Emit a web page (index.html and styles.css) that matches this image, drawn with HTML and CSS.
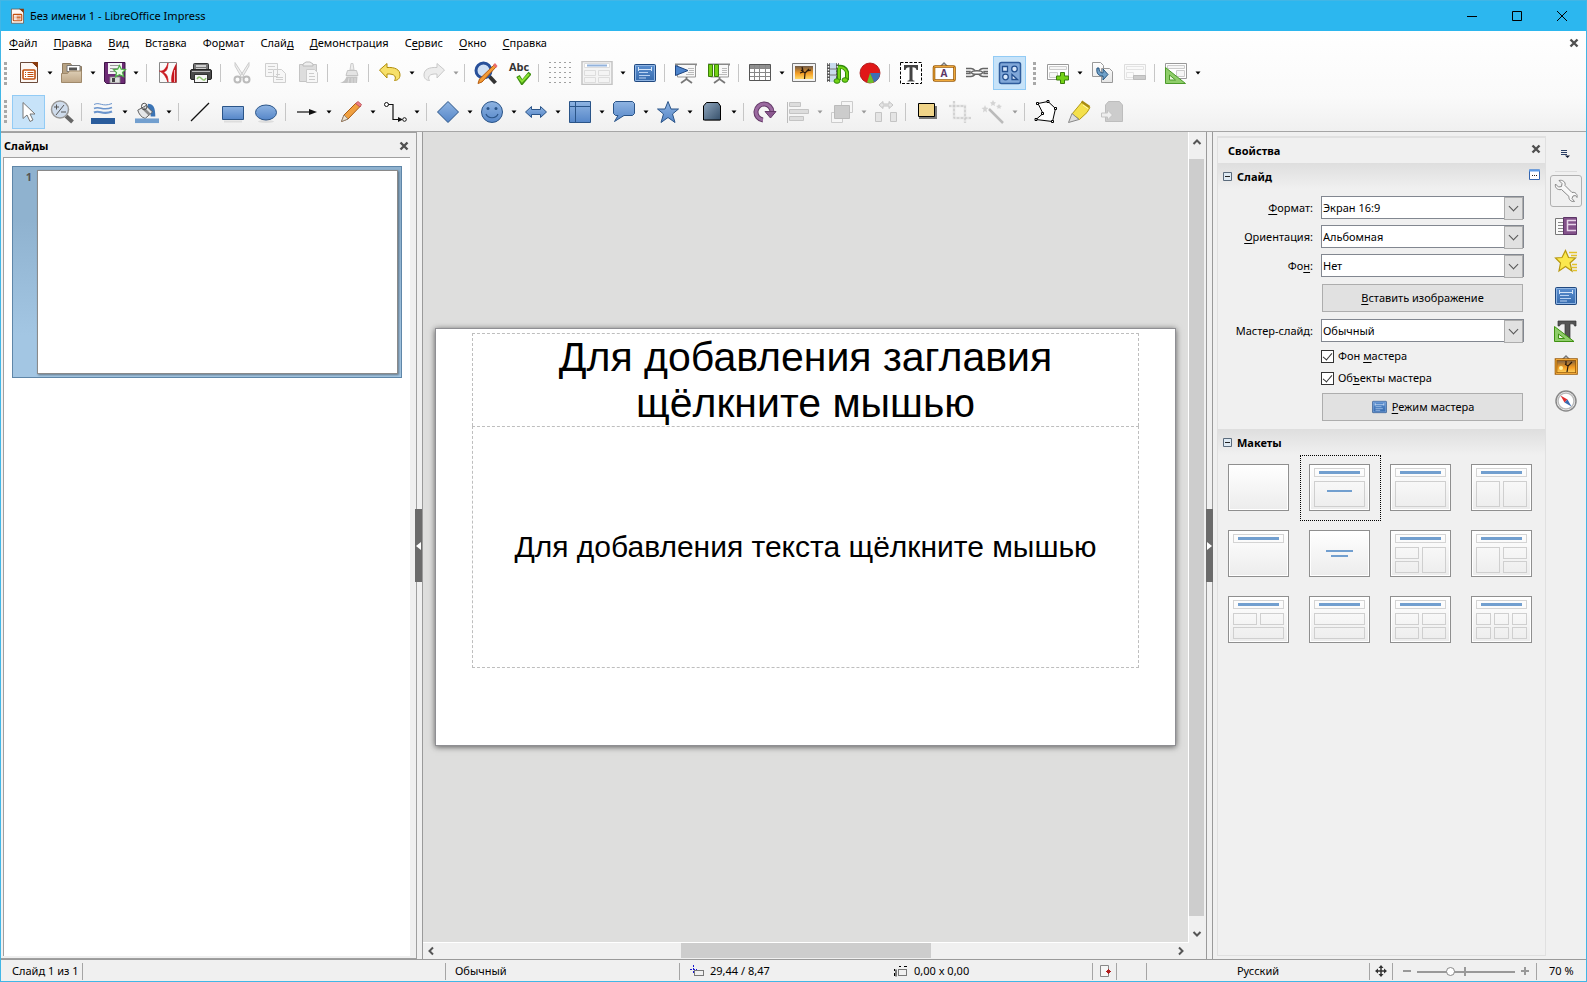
FILE: index.html
```html
<!DOCTYPE html>
<html lang="ru">
<head>
<meta charset="utf-8">
<title>Без имени 1 - LibreOffice Impress</title>
<link rel="stylesheet" href="styles.css">
</head>
<body>
<svg class="sprite" aria-hidden="true">
  <defs>
    <linearGradient id="g-blue" x1="0" y1="0" x2="0" y2="1"><stop offset="0" stop-color="#8fb4e2"/><stop offset="1" stop-color="#5586c8"/></linearGradient>
    <linearGradient id="g-deep" x1="0" y1="0" x2="0" y2="1"><stop offset="0" stop-color="#5b8fd0"/><stop offset="1" stop-color="#356aad"/></linearGradient>
    <linearGradient id="g-page" x1="0" y1="0" x2="0" y2="1"><stop offset="0" stop-color="#fff"/><stop offset="1" stop-color="#e6e6e6"/></linearGradient>
    <linearGradient id="g-tan" x1="0" y1="0" x2="0" y2="1"><stop offset="0" stop-color="#dccdb4"/><stop offset="1" stop-color="#c0a888"/></linearGradient>
    <linearGradient id="g-sun" x1="0" y1="0" x2="0" y2="1"><stop offset="0" stop-color="#6f5a48"/><stop offset="0.55" stop-color="#f39b22"/><stop offset="1" stop-color="#ffd968"/></linearGradient>
    <linearGradient id="g-slate" x1="0" y1="0" x2="1" y2="1"><stop offset="0" stop-color="#8fa6bd"/><stop offset="1" stop-color="#36506b"/></linearGradient>
  </defs>
  <symbol id="i-doc" viewBox="0 0 24 24"><path d="M3.500 1.500h12l5 5v15h-17z" fill="#fdf8f4" stroke="#6b4a3a"/><path d="M14 1h7v7l-2-3z" fill="#8a3a0c"/><rect x="6" y="9" width="12" height="9" rx="1" fill="#fff" stroke="#c2500f" stroke-width="1.600"/><path d="M8 11.500h1m1.500 0h6M8 13.500h1m1.500 0h6M8 15.500h1m1.500 0h6" stroke="#c2500f" stroke-width="1.200"/></symbol>
  <symbol id="i-open" viewBox="0 0 24 24"><path d="M2.500 20V2.500h8l2 3h9V20z" fill="#b7a283" stroke="#8f7b60"/><path d="M7 4.500h13v6H7z" fill="#fff" stroke="#777"/><path d="M9 6.500h8v3H9z" fill="#555"/><path d="M1.500 21.500v-9h6l2-2.500h12v11.500z" fill="url(#g-tan)" stroke="#a08a6b"/></symbol>
  <symbol id="i-save" viewBox="0 0 24 24"><path d="M1.500 1.500h20.500v21H3.500l-2-2z" fill="#6d2c75" stroke="#3e1446"/><rect x="5" y="2" width="14" height="11" fill="#f4f4f4"/><path d="M7 4.500h10M7 7.500h10M7 10.500h5" stroke="#999"/><rect x="7" y="16" width="10" height="6" fill="#ddd" stroke="#888" stroke-width=".8"/><rect x="9" y="17" width="3" height="4" fill="#444"/><path d="M16.500 4.500l1.700 3.600 4.300.3-3 3 1.200 4.300-4.200-2-4 2.200 1-4.300-3-3 4.200-.5z" fill="#e9ffe4" stroke="#4fae48" stroke-width="1.200"/></symbol>
  <symbol id="i-pdf" viewBox="0 0 24 24"><path d="M3.500 1.500h17v20h-17z" fill="#fafafa" stroke="#888"/><path d="M3.500 10c4 1 7-3 8.500-8-.5 6-1 8-5 9.500 4 1 5 5 5 9.500-2-5-4-9-8.500-11z" fill="#c8161d" stroke="#c8161d" stroke-width=".8"/><path d="M15.500 21.500c-1-6 1-13 5-19.500v19.500z" fill="#c8161d"/><path d="M18.500 9v12" stroke="#f0b0b2"/></symbol>
  <symbol id="i-print" viewBox="0 0 24 24"><rect x="4.500" y="2.500" width="15" height="8" rx="1" fill="#777" stroke="#333"/><path d="M7 5h10M7 8h10" stroke="#eee" stroke-width="1.500"/><rect x="1.500" y="8.500" width="21" height="10" rx="1.500" fill="#4a4a4a" stroke="#222"/><path d="M3 10.500h18" stroke="#bbb"/><rect x="5.500" y="13.500" width="13" height="8" fill="#f7f7f7" stroke="#333"/><path d="M8 18c2-3 3-2 5 0s3 1 4-1" stroke="#8fc670" stroke-width="1.500" fill="none"/></symbol>
  <symbol id="i-cut" viewBox="0 0 24 24"><path d="M5 1.500l9 14-2 1.500L5 5zM19 1.500l-9 14 2 1.500L19 5z" fill="#eee" stroke="#ccc"/><g fill="none" stroke="#bbb" stroke-width="2"><circle cx="7.500" cy="18.500" r="3"/><circle cx="16.500" cy="18.500" r="3"/></g></symbol>
  <symbol id="i-copy" viewBox="0 0 24 24"><g fill="#f7f7f7" stroke="#cfcfcf"><path d="M2.500 2.500h12v13h-12zM10.500 8.500h8l4 4v9h-12z"/><path d="M5 5.500h7M5 8.500h5M5 11.500h4M13 13.500h4M13 16.500h7M13 18.500h7"/></g></symbol>
  <symbol id="i-paste" viewBox="0 0 24 24"><path d="M3.500 3.500h17v17h-17z" fill="#ddd" stroke="#c4c4c4"/><path d="M7 5V3l3-2h4l3 2v2z" fill="#eee" stroke="#bbb"/><path d="M10.500 8.500h8l3 3v10h-11z" fill="#f7f7f7" stroke="#ccc"/><path d="M13 12.500h5M13 15.500h6M13 18.500h6" stroke="#ccc"/></symbol>
  <symbol id="i-brush" viewBox="0 0 24 24"><path d="M14 2.500h2l1 6.500h-4z" fill="#eee" stroke="#ccc"/><path d="M10.500 9.500h9l1.500 5H9z" fill="#e4e4e4" stroke="#c4c4c4"/><path d="M9.500 15.500h11l-.5 6.500H3c3.500-1 5.500-3 6.500-6.500z" fill="#c4c4c4"/><path d="M12 17l-1 5M15 17v5M18 17v5" stroke="#ddd"/></symbol>
  <symbol id="i-undo" viewBox="0 0 24 24"><path d="M1.500 9L9 2.500v4c8-.5 13 2 13 7.500 0 4-3 5.500-5.500 5.500 2-3 1-7-7.500-6.500v4z" fill="#f7e06a" stroke="#b08c0a" stroke-linejoin="round"/></symbol>
  <symbol id="i-redo" viewBox="0 0 24 24"><path d="M22.500 9L15 2.500v4C7 6 2 8.500 2 14c0 4 3 5.500 5.500 5.500-2-3-1-7 7.500-6.500v4z" fill="#ececec" stroke="#c9c9c9" stroke-linejoin="round"/></symbol>
  <symbol id="i-find" viewBox="0 0 24 24"><path d="M15 15l6.500 7" stroke="#333" stroke-width="4"/><circle cx="9.500" cy="9.500" r="7.500" fill="#cfdff4" stroke="#28509a" stroke-width="3"/><path d="M20 4l2 2L8 21l-4 1.500L5.500 18z" fill="#f39a35" stroke="#b65c0e"/><path d="M19 4l3 3 1.500-2L21 2z" fill="#ea6b6b"/></symbol>
  <symbol id="i-grid" viewBox="0 0 24 24"><path d="M1.500 1.500h22M1.500 6.500h22M1.500 11.500h22M1.500 16.500h22M1.500 21.500h22" stroke="#444" stroke-dasharray="1 4"/></symbol>
  <symbol id="i-layout" viewBox="0 0 32 24"><path d="M1 .5h30v23H1z" fill="#f4f4f4" stroke="#c4c4c4" stroke-width="1.500"/><path d="M3.500 2.500h25v4h-25z" fill="#fff" stroke="#ddd"/><path d="M6 4.500h20" stroke="#93b3dc" stroke-width="2"/><path d="M3.500 9.500h11v5h-11zM17.500 9.500h11v5h-11zM3.500 16.500h11v5h-11zM17.500 16.500h11v5h-11z" fill="none" stroke="#ddd"/></symbol>
  <symbol id="i-slide" viewBox="0 0 24 24"><rect x="1.500" y="3.500" width="21" height="17" rx="1" fill="url(#g-deep)" stroke="#20487f"/><path d="M2.500 4.500h19v15h-19z" fill="none" stroke="#8fb4e2"/><path d="M5 8.500h14M5.500 6v4M18.500 6v4" stroke="#d4e4f8"/><path d="M6 11.500h9M6 14.500h11M6 17h7" stroke="#b9d2f2"/></symbol>
  <symbol id="i-show" viewBox="0 0 24 24"><path d="M1 3.500h22" stroke="#888" stroke-width="2"/><path d="M3.500 4v12h18V4" fill="#f8f8f8" stroke="#999"/><path d="M14 7.500h6M15 9.500h5M14 11.500h6M12 13.500h8" stroke="#bbb"/><path d="M1.500 4.500L14 9.500l-12.500 5z" fill="#4d84cc" stroke="#1e4580"/><path d="M12.500 16v3M7 22l5.500-4L18 22" fill="none" stroke="#777" stroke-width="1.800"/></symbol>
  <symbol id="i-show2" viewBox="0 0 24 24"><path d="M1 3.500h22" stroke="#888" stroke-width="2"/><path d="M3.500 4v12h18V4" fill="#f8f8f8" stroke="#999"/><path d="M15 7.500h5M15 9.500h5M15 11.500h5M12 13.500h8" stroke="#bbb"/><path d="M1.500 3.500h4v12h-4zM7.500 3.500h4v12h-4z" fill="#73d216" stroke="#3b7d0b"/><path d="M12.500 16v3M7 22l5.500-4L18 22" fill="none" stroke="#777" stroke-width="1.800"/></symbol>
  <symbol id="i-table" viewBox="0 0 24 24"><path d="M1.500 3.500h21v16h-21z" fill="#fff"/><path d="M1.500 3.500h21v4h-21z" fill="#909090"/><path d="M1 7.500h22M1 11.500h22M1 15.500h22M6.500 3v17M11.500 3v17M17.500 3v17" fill="none" stroke="#888"/><path d="M1.500 3.500h21v16h-21z" fill="none" stroke="#555"/></symbol>
  <symbol id="i-photo" viewBox="0 0 24 24"><path d="M.5 2.500h23v18H.5z" fill="#f2f2f2" stroke="#777"/><path d="M3 5h18v13H3z" fill="url(#g-sun)"/><path d="M12.500 18l.5-6-4-3M13 12l4-4M11 10l-1-4M15 10l4-1M8 12l3-1" stroke="#2b1a0c" stroke-width="1.200" fill="none"/></symbol>
  <symbol id="i-media" viewBox="0 0 24 24"><path d="M2 2h12v19H2z" fill="#c9dbee"/><path d="M3.500 2v19M12.500 2v19" stroke="#555" stroke-width="3"/><path d="M3.500 2v19M12.500 2v19" stroke="#fff" stroke-width="1.500" stroke-dasharray="1.500 1.500"/><path d="M5 8h6M5 14h6" stroke="#777"/><path d="M13 6c4-1 8 1 9 5v8M14 7v12" fill="none" stroke="#2f8a0a" stroke-width="4"/><path d="M13 6.500c4-1 8 1 9 5V19M14 7v12" fill="none" stroke="#73d216" stroke-width="2"/><ellipse cx="12" cy="20" rx="3" ry="2.300" fill="#73d216" stroke="#2f8a0a"/><ellipse cx="20" cy="19" rx="3" ry="2.300" fill="#73d216" stroke="#2f8a0a"/></symbol>
  <symbol id="i-chart" viewBox="0 0 24 24"><circle cx="12" cy="12" r="10" fill="#e01818" stroke="#a30c0c" stroke-width=".8"/><path d="M12 12h10a10 10 0 0 1-6 9.200z" fill="#3e6fb5"/><path d="M12 12l4 9.200a10 10 0 0 1-7 .4z" fill="#6cbf2a"/></symbol>
  <symbol id="i-text" viewBox="0 0 24 24"><path d="M1.500 1.500h21v21h-21z" fill="#fff" stroke="#000" stroke-dasharray="3 1.500"/><path d="M5 4h14v5h-1.500c-.5-2-1-2.800-4-2.800V18c0 1.500.5 1.500 2 1.700V20.500H8.500v-.8c1.500-.2 2-.2 2-1.700V6.200c-3 0-3.500.8-4 2.800H5z" fill="#444"/></symbol>
  <symbol id="i-link" viewBox="0 0 24 24"><g fill="none" stroke="#666" stroke-width="1.500"><path d="M1 7.500h5c2 0 3 1 4 2M1 15.500h5c2 0 3-1 4-2M23 7.500h-5c-2 0-3 1-4 2M23 15.500h-5c-2 0-3-1-4-2M1 10.500h4v2H1M23 10.500h-4v2h4"/><ellipse cx="12" cy="11.500" rx="5.500" ry="1.800"/></g></symbol>
  <symbol id="i-draw" viewBox="0 0 24 24"><rect x="1.500" y="1.500" width="21" height="21" rx="2" fill="#81a8d9" stroke="#2f5c9c" stroke-width="1.500"/><g fill="#d9e9fb" stroke="#24508f" stroke-width="1.300"><path d="M4.500 5.500h5v5h-5z"/><circle cx="16.500" cy="8" r="2.800"/><circle cx="7.500" cy="16" r="2.800"/><path d="M14 13.500v5h5.500z"/></g></symbol>
  <symbol id="i-newslide" viewBox="0 0 24 24"><path d="M1.500 3.500h21v15h-21z" fill="#fff" stroke="#999"/><path d="M3.500 5.500h17v3h-17zM3.500 11.500h8v5h-8z" fill="#f6f6f6" stroke="#ccc"/><path d="M14.500 11.500h4v3.500h4v4h-4v3.500h-4v-3.500h-4v-4h4z" fill="#73d216" stroke="#3b7d0b"/></symbol>
  <symbol id="i-dup" viewBox="0 0 24 24"><path d="M2.500 1.500h8l3 3v11h-11zM11.500 7.500h8l3 3v11h-11z" fill="url(#g-page)" stroke="#999"/><path d="M7 7c-1 6 2 8 6 8v4l5-5.500-5-5.500v4c-3 0-4-2-4-5z" fill="#6fa0c8" stroke="#27557f"/></symbol>
  <symbol id="i-delslide" viewBox="0 0 24 24"><path d="M1.500 3.500h21v15h-21z" fill="#fafafa" stroke="#ddd"/><path d="M3.500 5.500h17v3h-17zM3.500 11.500h7v5h-7z" fill="none" stroke="#e4e4e4"/><path d="M10.500 14.500h12v4h-12z" fill="#ccc" stroke="#bbb"/></symbol>
  <symbol id="i-design" viewBox="0 0 24 24"><path d="M1.500 2.500h21v15h-21z" fill="#fff" stroke="#999"/><path d="M3.500 4.500h17v3h-17zM12.500 9.500h8v6h-8z" fill="#f6f6f6" stroke="#ccc"/><path d="M1.500 6.500v16h20z" fill="#8fce6a" stroke="#4c9a2a"/><path d="M5.500 14v5h6z" fill="#eaf7e0" stroke="#4c9a2a"/></symbol>
  <symbol id="i-select" viewBox="0 0 24 24"><path d="M6 2.500v16l4-3.500 3 6.500 3-1.500-3-6h5z" fill="#fff" stroke="#777" stroke-linejoin="round"/></symbol>
  <symbol id="i-zoom" viewBox="0 0 24 24"><path d="M16 16l6.500 6" stroke="#666" stroke-width="4"/><circle cx="10" cy="9.500" r="8.500" fill="#cfdcec" stroke="#999" stroke-width="1.500"/><path d="M4 7h5M6.500 4.500v5M11 12h5M14 5L6 15" stroke="#555"/></symbol>
  <symbol id="i-lines" viewBox="0 0 24 24"><g fill="none" stroke="#6a94cc"><path d="M3 4.500c6-3 8 3 18-1" stroke-width="1"/><path d="M3 8.500c6-3 8 3 18-1" stroke-width="1.600"/><path d="M3 12.500c6-3 8 3 18-1" stroke-width="2.200"/></g><path d="M0 18h24v6H0z" fill="#2a5c9c"/></symbol>
  <symbol id="i-fill" viewBox="0 0 26 24"><path d="M14 3c6 0 8 4 8 14h-5c0-5-1-6-4-8z" fill="#3b74b5"/><path d="M3 10l9-5 7 7-8 7c-4-1-7-5-8-9z" fill="#e4e6e8" stroke="#555"/><path d="M9 8l7 7" stroke="#888" stroke-width="3"/><ellipse cx="10" cy="6" rx="3" ry="3.500" fill="none" stroke="#444"/><path d="M0 19h26v5H0z" fill="#729fcf"/></symbol>
  <symbol id="i-line" viewBox="0 0 24 24"><path d="M3 21L21 3" stroke="#111" stroke-width="1.200"/></symbol>
  <symbol id="i-rect" viewBox="0 0 24 24"><path d="M3 21.500h18" stroke="#ddd" stroke-width="2"/><path d="M1.500 6.500h21v13h-21z" fill="url(#g-blue)" stroke="#2a5488"/></symbol>
  <symbol id="i-ellipse" viewBox="0 0 24 24"><ellipse cx="12" cy="21.500" rx="8" ry="1.500" fill="#ddd"/><ellipse cx="12" cy="12.500" rx="10.500" ry="7.500" fill="url(#g-blue)" stroke="#2a5488"/></symbol>
  <symbol id="i-arrow" viewBox="0 0 24 24"><path d="M2 12h15" stroke="#111" stroke-width="1.200"/><path d="M14 9l8 3-8 3z" fill="#111"/></symbol>
  <symbol id="i-pencil" viewBox="0 0 24 24"><path d="M17 3l4.500 3L9 19l-6.500 2.500L5 15z" fill="#f0a040" stroke="#a85a12"/><path d="M16.500 3.500L19 1.500l3.500 3L21 7z" fill="#ec7f85" stroke="#b84a50" stroke-width=".8"/><path d="M2.500 21.500L5 15l4 4z" fill="#eee0cc" stroke="#777" stroke-width=".7"/></symbol>
  <symbol id="i-conn" viewBox="0 0 24 24"><path d="M5 4.500h5v15h9" fill="none" stroke="#111" stroke-width="1.200"/><path d="M15 17v5l5-2.500z" fill="#111"/><circle cx="3.500" cy="4.500" r="2" fill="#fff" stroke="#111"/><circle cx="21.500" cy="19.500" r="1.800" fill="#fff" stroke="#111"/></symbol>
  <symbol id="i-diamond" viewBox="0 0 24 24"><path d="M12 1.500L22.500 12 12 22.500 1.500 12z" fill="url(#g-blue)" stroke="#2a5488"/></symbol>
  <symbol id="i-smile" viewBox="0 0 24 24"><circle cx="12" cy="12" r="10.500" fill="url(#g-blue)" stroke="#2a5488"/><circle cx="8" cy="8.500" r="1.500" fill="#2a5488"/><circle cx="16" cy="8.500" r="1.500" fill="#2a5488"/><path d="M6 14c2 5 10 5 12 0" fill="none" stroke="#2a5488" stroke-width="1.200"/></symbol>
  <symbol id="i-dbl" viewBox="0 0 24 24"><path d="M1.500 12l6-5.500v3h9v-3l6 5.500-6 5.500v-3h-9v3z" fill="url(#g-blue)" stroke="#2a5488"/></symbol>
  <symbol id="i-flow" viewBox="0 0 24 24"><path d="M1.500 1.500h21v21h-21zM1.500 6.500h21M7.500 1.500v21" fill="url(#g-blue)" stroke="#2a5488"/></symbol>
  <symbol id="i-callout" viewBox="0 0 24 24"><path d="M3.500 1.500h17l2 2v10l-2 2H12l-9.500 6 3.500-6H3.500l-2-2v-10z" fill="url(#g-blue)" stroke="#2a5488"/></symbol>
  <symbol id="i-star" viewBox="0 0 24 24"><path d="M12 1.500l3 7.500h7.500l-6 5 2.500 8.500-7-5-7 5L7.500 14l-6-5H9z" fill="url(#g-blue)" stroke="#2a5488"/></symbol>
  <symbol id="i-cube" viewBox="0 0 24 24"><path d="M5 4h15v17H5z" fill="#aaa"/><path d="M3.500 6l3-3.500H18l2.500 3.500v14h-17z" fill="url(#g-slate)" stroke="#000"/></symbol>
  <symbol id="i-rotate" viewBox="0 0 24 24"><path d="M10 20a8 8 0 1 1 9-8" fill="none" stroke="#643a68" stroke-width="5"/><path d="M10 20a8 8 0 1 1 9-8" fill="none" stroke="#9b6aa0" stroke-width="3"/><path d="M12 11.500h11L17.500 18z" fill="#8b5890" stroke="#643a68"/></symbol>
  <symbol id="i-align" viewBox="0 0 24 24"><path d="M1.500 2v21" stroke="#bbb"/><path d="M3.500 2.500h11v4h-11zM3.500 9.500h19v4h-19zM3.500 16.500h14v4h-14z" fill="#ddd" stroke="#c4c4c4"/></symbol>
  <symbol id="i-stack" viewBox="0 0 24 24"><path d="M11.500 1.500h11v11h-11zM1.500 12.500h11v10h-11z" fill="#f6f6f6" stroke="#ccc"/><path d="M4.500 5.500h15v13h-15z" fill="#ccc" stroke="#bbb"/></symbol>
  <symbol id="i-dist" viewBox="0 0 24 24"><path d="M5 5l4-3.500V4h6V1.500L19 5l-4 3.500V6H9v2.500zM1.500 12.500h6v9h-6zM16.500 12.500h6v9h-6z" fill="#e4e4e4" stroke="#c4c4c4"/></symbol>
  <symbol id="i-shadow" viewBox="0 0 24 24"><path d="M4 6h18v13H4z" fill="#777"/><path d="M3.500 3.500h16v13h-16z" fill="#f0d488" stroke="#000"/></symbol>
  <symbol id="i-crop" viewBox="0 0 24 24"><path d="M6 1v17h17M1 6h16v17" fill="none" stroke="#e2e2e2" stroke-width="2.500"/><path d="M6 1v17h17M1 6h16v17" fill="none" stroke="#c4c4c4" stroke-dasharray="2 2"/></symbol>
  <symbol id="i-wand" viewBox="0 0 24 24"><path d="M8 9l14 14" stroke="#bbb" stroke-width="2.500"/><path d="M4 5l1 2.500 2.500.5-2 1.500.5 3-2-1.500-2 1.500.5-3-2-1.500 2.500-.5zM12 0l1 2 2 .5-1.500 1.500.5 2-2-1-2 1 .5-2L9 2.500l2-.5zM18 4l1 1.500 2 .5-1.500 1v2L18 8l-1.500 1V7L15 6l2-.5z" fill="#d4d4d4"/></symbol>
  <symbol id="i-points" viewBox="0 0 24 24"><path d="M4 3.500l10-2L21.500 8.500 18.500 21.500 2 19.500l7-6z" fill="#fff" stroke="#000"/><g fill="#fff" stroke="#000"><path d="M2.500 2.500h2v2h-2zM13 .5h2v2h-2zM20.500 7.500h2v2h-2zM17.500 20.500h2v2h-2zM1 18.500h2v2H1zM7.500 12.500h2v2h-2z"/></g></symbol>
  <symbol id="i-glue" viewBox="0 0 24 24"><path d="M15 2l8 5.500-3 5-7.500 7L5 14z" fill="#f4e04c" stroke="#b39a12"/><path d="M14.500 1.500l8 5.500" stroke="#a88b10" stroke-width="2.500"/><path d="M16 5l5 3.500" stroke="#fff8b0"/><path d="M5 13.500l7 6L1.500 22.500z" fill="#ddd" stroke="#888"/></symbol>
  <symbol id="i-ext" viewBox="0 0 24 24"><path d="M5.500 5l3-3.500h11l3 3.500v16.500h-17z" fill="#ccc" stroke="#bdbdbd"/><path d="M1.500 13h6v-3l5 5-5 5v-3h-6z" fill="#eee" stroke="#c4c4c4"/></symbol>
  <symbol id="i-wrench" viewBox="0 0 24 24"><path d="M5 1.500l3 3-.5 3-3 .5-3-3C.5 8 3 11.500 7.500 10.500l7.500 7c-.5 3 2 5.500 5.500 5L18 19.500l1-2.500 2.500-.5 1.500 2c1-3-2-6-5-5l-7-7c1-3.500-2.500-6-6-5z" fill="#f8f8f8" stroke="#888"/></symbol>
  <symbol id="i-trans" viewBox="0 0 24 24"><path d="M1.500 4.500h10v16h-10z" fill="#fafafa" stroke="#777"/><path d="M4 8.500h5M4 11.500h5M4 14.500h5M4 17.500h5" stroke="#888"/><path d="M9.500 3.500h13v17h-13z" fill="#83528a" stroke="#5c3566"/><path d="M22 6.500h-8.500v10H22M14 10.500h8" fill="none" stroke="#e8d6ea" stroke-width="1.500"/></symbol>
  <symbol id="i-anim" viewBox="0 0 24 24"><path d="M15 3.500h8M17 6.500h6M18 15.500h5M18 18.500h5M19 21.500h4" stroke="#e3c12b" stroke-width="1.500"/><path d="M11.500 1.500l3 7 7 .5-5.500 5 2 8-6.500-4.500L5 22l1.500-8-5-5 6.500-.5z" fill="#fbe84e" stroke="#b8990f" stroke-width="1.200"/></symbol>
  <symbol id="i-styles" viewBox="0 0 24 24"><path d="M4 2h18v5h-1.500c-.5-2-1-2.200-4.500-2.200V20h-5V4.800C7.500 4.800 6 5 5.500 7H4z" fill="#555" stroke="#333" stroke-width=".7"/><path d="M.5 7.500v15H20z" fill="#8fce6a" stroke="#3f9010"/><path d="M4.500 15v4.500h6z" fill="#eaf7e0" stroke="#3f9010"/></symbol>
  <symbol id="i-gallery" viewBox="0 0 24 24"><path d="M8 6l4-4 4 4" fill="none" stroke="#777" stroke-width="1.500"/><path d="M2 5.500h20.500v14H2z" fill="url(#g-sun)" stroke="#9a5a06" stroke-width="2.600"/><path d="M2 5.500h20.500v14H2z" fill="none" stroke="#f0a93a"/><path d="M13 18l1-6-3-2M14 12l4-4M12 10V7" stroke="#2b1a0c" stroke-width="1.200" fill="none"/><circle cx="7" cy="14" r="2" fill="#fff2a0"/></symbol>
  <symbol id="i-compass" viewBox="0 0 24 24"><circle cx="12" cy="12" r="10" fill="#fff" stroke="#888" stroke-width="1.500"/><circle cx="12" cy="12" r="8" fill="#fff" stroke="#bbb" stroke-width="1.500"/><path d="M6.500 6.500l7 4-3 3z" fill="#e03030"/><path d="M17.500 17.500l-7-4 3-3z" fill="#3a6ab0"/></symbol>
  <symbol id="i-x" viewBox="0 0 10 10"><path d="M1.500 1.500l7 7M8.500 1.500l-7 7" stroke="#505050" stroke-width="2.400"/></symbol>
  <symbol id="i-tri" viewBox="0 0 6 4"><path d="M.5 .5h5L3 3.500z"/></symbol>
  <symbol id="i-minus" viewBox="0 0 10 10"><path d="M.5 .5h8v8h-8z" fill="#dfeaf3" stroke="#5b6b7c"/><path d="M2 4.500h5" stroke="#222"/></symbol>
  <symbol id="i-up" viewBox="0 0 10 8"><path d="M1.500 6L5 2.500 8.500 6" fill="none" stroke="#555" stroke-width="2"/></symbol>
</svg>

<div class="window">
  <header class="titlebar">
    <svg class="app-icon"><use href="#i-doc"/></svg>
    <h1 class="app-title">Без имени 1 - LibreOffice Impress</h1>
    <button class="win-btn" aria-label="Свернуть"><svg viewBox="0 0 10 10"><path d="M0 5.500h10" stroke="#000"/></svg></button>
    <button class="win-btn" aria-label="Развернуть"><svg viewBox="0 0 10 10"><path d="M.5 .5h9v9h-9z" stroke="#000" fill="none"/></svg></button>
    <button class="win-btn" aria-label="Закрыть"><svg viewBox="0 0 10 10"><path d="M0 0l10 10M10 0L0 10" stroke="#000"/></svg></button>
  </header>

  <div class="chrome">
    <nav class="menubar">
      <button><u>Ф</u>айл</button><button><u>П</u>равка</button><button><u>В</u>ид</button><button>Вст<u>а</u>вка</button><button>Фо<u>р</u>мат</button><button>Слай<u>д</u></button><button><u>Д</u>емонстрация</button><button>С<u>е</u>рвис</button><button><u>О</u>кно</button><button><u>С</u>правка</button>
      <button class="close" aria-label="Закрыть документ"><svg><use href="#i-x"/></svg></button>
    </nav>

    <div class="toolbar" role="toolbar" aria-label="Стандартная">
      <span class="grip"></span>
      <div class="group tight">
        <button class="tool" aria-label="Создать"><svg><use href="#i-doc"/></svg></button><button class="drop" aria-label="Ещё"><svg><use href="#i-tri"/></svg></button>
        <button class="tool" aria-label="Открыть"><svg><use href="#i-open"/></svg></button><button class="drop" aria-label="Ещё"><svg><use href="#i-tri"/></svg></button>
        <button class="tool" aria-label="Сохранить"><svg><use href="#i-save"/></svg></button><button class="drop" aria-label="Ещё"><svg><use href="#i-tri"/></svg></button>
      </div>
      <span class="sep"></span>
      <button class="tool" aria-label="PDF"><svg><use href="#i-pdf"/></svg></button>
      <button class="tool" aria-label="Печать"><svg><use href="#i-print"/></svg></button>
      <span class="sep"></span>
      <button class="tool" disabled aria-label="Вырезать"><svg><use href="#i-cut"/></svg></button>
      <button class="tool" disabled aria-label="Копировать"><svg><use href="#i-copy"/></svg></button>
      <button class="tool" disabled aria-label="Вставить"><svg><use href="#i-paste"/></svg></button>
      <span class="sep"></span>
      <button class="tool" disabled aria-label="Копировать формат"><svg><use href="#i-brush"/></svg></button>
      <span class="sep"></span>
      <button class="tool" aria-label="Отменить"><svg><use href="#i-undo"/></svg></button><button class="drop" aria-label="Ещё"><svg><use href="#i-tri"/></svg></button>
      <button class="tool" disabled aria-label="Вернуть"><svg><use href="#i-redo"/></svg></button><button class="drop" disabled aria-label="Ещё"><svg><use href="#i-tri"/></svg></button>
      <span class="sep"></span>
      <button class="tool" aria-label="Найти и заменить"><svg><use href="#i-find"/></svg></button>
      <button class="tool" aria-label="Орфография"><svg viewBox="0 0 24 24"><text x="12" y="10" text-anchor="middle" class="abc">Abc</text><path d="M11 15l4 6.500L23 12" fill="none" stroke="#3f9010" stroke-width="4"/><path d="M11.500 16l3.500 4.500 7-7.500" fill="none" stroke="#8ae234" stroke-width="2"/></svg></button>
      <span class="sep"></span>
      <button class="tool" aria-label="Сетка"><svg><use href="#i-grid"/></svg></button>
      <button class="tool wide" aria-label="Виды"><svg><use href="#i-layout"/></svg></button><button class="drop" aria-label="Ещё"><svg><use href="#i-tri"/></svg></button>
      <button class="tool" aria-label="Мастер-слайд"><svg><use href="#i-slide"/></svg></button>
      <span class="sep"></span>
      <button class="tool" aria-label="Показ с первого"><svg><use href="#i-show"/></svg></button>
      <button class="tool" aria-label="Показ с текущего"><svg><use href="#i-show2"/></svg></button>
      <span class="sep"></span>
      <button class="tool" aria-label="Таблица"><svg><use href="#i-table"/></svg></button><button class="drop" aria-label="Ещё"><svg><use href="#i-tri"/></svg></button>
      <button class="tool" aria-label="Изображение"><svg><use href="#i-photo"/></svg></button>
      <button class="tool" aria-label="Аудио или видео"><svg><use href="#i-media"/></svg></button>
      <button class="tool" aria-label="Диаграмма"><svg><use href="#i-chart"/></svg></button>
      <span class="sep"></span>
      <button class="tool" aria-label="Текстовое поле"><svg><use href="#i-text"/></svg></button>
      <button class="tool" aria-label="Fontwork"><svg viewBox="0 0 24 24"><path d="M8 6l4-4 4 4" fill="none" stroke="#777" stroke-width="1.500"/><rect x="2" y="5.500" width="20.500" height="14" rx="1" fill="#fff" stroke="#9a5a06" stroke-width="2.600"/><rect x="2" y="5.500" width="20.500" height="14" rx="1" fill="none" stroke="#f0a93a"/><text x="12" y="16" text-anchor="middle" class="glyph-a">A</text></svg></button>
      <button class="tool" aria-label="Гиперссылка"><svg><use href="#i-link"/></svg></button>
      <button class="tool on" aria-label="Рисование"><svg><use href="#i-draw"/></svg></button>
      <span class="grip inner"></span>
      <button class="tool" aria-label="Создать слайд"><svg><use href="#i-newslide"/></svg></button><button class="drop" aria-label="Ещё"><svg><use href="#i-tri"/></svg></button>
      <button class="tool" aria-label="Дублировать слайд"><svg><use href="#i-dup"/></svg></button>
      <button class="tool" disabled aria-label="Удалить слайд"><svg><use href="#i-delslide"/></svg></button>
      <span class="sep"></span>
      <button class="tool" aria-label="Макет слайда"><svg><use href="#i-design"/></svg></button><button class="drop" aria-label="Ещё"><svg><use href="#i-tri"/></svg></button>
    </div>

    <div class="toolbar drawing" role="toolbar" aria-label="Рисование">
      <span class="grip"></span>
      <button class="tool on" aria-label="Выделить"><svg><use href="#i-select"/></svg></button>
      <button class="tool" aria-label="Масштаб"><svg><use href="#i-zoom"/></svg></button>
      <span class="sep"></span>
      <button class="tool" aria-label="Цвет линий"><svg><use href="#i-lines"/></svg></button><button class="drop" aria-label="Ещё"><svg><use href="#i-tri"/></svg></button>
      <button class="tool" aria-label="Цвет заливки"><svg><use href="#i-fill"/></svg></button><button class="drop" aria-label="Ещё"><svg><use href="#i-tri"/></svg></button>
      <span class="sep"></span>
      <button class="tool" aria-label="Линия"><svg><use href="#i-line"/></svg></button>
      <button class="tool" aria-label="Прямоугольник"><svg><use href="#i-rect"/></svg></button>
      <button class="tool" aria-label="Эллипс"><svg><use href="#i-ellipse"/></svg></button>
      <span class="sep"></span>
      <button class="tool" aria-label="Линии и стрелки"><svg><use href="#i-arrow"/></svg></button><button class="drop" aria-label="Ещё"><svg><use href="#i-tri"/></svg></button>
      <button class="tool" aria-label="Кривая"><svg><use href="#i-pencil"/></svg></button><button class="drop" aria-label="Ещё"><svg><use href="#i-tri"/></svg></button>
      <button class="tool" aria-label="Соединители"><svg><use href="#i-conn"/></svg></button><button class="drop" aria-label="Ещё"><svg><use href="#i-tri"/></svg></button>
      <span class="sep"></span>
      <button class="tool" aria-label="Основные фигуры"><svg><use href="#i-diamond"/></svg></button><button class="drop" aria-label="Ещё"><svg><use href="#i-tri"/></svg></button>
      <button class="tool" aria-label="Символы"><svg><use href="#i-smile"/></svg></button><button class="drop" aria-label="Ещё"><svg><use href="#i-tri"/></svg></button>
      <button class="tool" aria-label="Блочные стрелки"><svg><use href="#i-dbl"/></svg></button><button class="drop" aria-label="Ещё"><svg><use href="#i-tri"/></svg></button>
      <button class="tool" aria-label="Блок-схемы"><svg><use href="#i-flow"/></svg></button><button class="drop" aria-label="Ещё"><svg><use href="#i-tri"/></svg></button>
      <button class="tool" aria-label="Выноски"><svg><use href="#i-callout"/></svg></button><button class="drop" aria-label="Ещё"><svg><use href="#i-tri"/></svg></button>
      <button class="tool" aria-label="Звёзды"><svg><use href="#i-star"/></svg></button><button class="drop" aria-label="Ещё"><svg><use href="#i-tri"/></svg></button>
      <button class="tool" aria-label="Объёмные фигуры"><svg><use href="#i-cube"/></svg></button><button class="drop" aria-label="Ещё"><svg><use href="#i-tri"/></svg></button>
      <span class="sep"></span>
      <button class="tool" aria-label="Повернуть"><svg><use href="#i-rotate"/></svg></button>
      <button class="tool" disabled aria-label="Выравнивание"><svg><use href="#i-align"/></svg></button><button class="drop" disabled aria-label="Ещё"><svg><use href="#i-tri"/></svg></button>
      <button class="tool" disabled aria-label="Расположить"><svg><use href="#i-stack"/></svg></button><button class="drop" disabled aria-label="Ещё"><svg><use href="#i-tri"/></svg></button>
      <button class="tool" disabled aria-label="Распределить"><svg><use href="#i-dist"/></svg></button>
      <span class="sep"></span>
      <button class="tool" aria-label="Тень"><svg><use href="#i-shadow"/></svg></button>
      <button class="tool" disabled aria-label="Кадрировать"><svg><use href="#i-crop"/></svg></button>
      <button class="tool" disabled aria-label="Фильтр"><svg><use href="#i-wand"/></svg></button><button class="drop" disabled aria-label="Ещё"><svg><use href="#i-tri"/></svg></button>
      <span class="sep"></span>
      <button class="tool" aria-label="Изменить узлы"><svg><use href="#i-points"/></svg></button>
      <button class="tool" aria-label="Точки соединения"><svg><use href="#i-glue"/></svg></button>
      <button class="tool" disabled aria-label="Экструзия"><svg><use href="#i-ext"/></svg></button>
    </div>
  </div>

  <main class="workspace">
    <section class="slides">
      <div class="panel-title"><h2>Слайды</h2><button class="close" aria-label="Закрыть панель"><svg><use href="#i-x"/></svg></button></div>
      <div class="slide-list">
        <div class="thumb"><span class="num">1</span><div class="mini"></div></div>
      </div>
    </section>
    <div class="splitter"><button aria-label="Свернуть панель слайдов"><svg viewBox="0 0 7 8"><path d="M6 0v8L1 4z" fill="#fff"/></svg></button></div>

    <section class="editor">
      <div class="canvas">
        <article class="slide">
          <div class="ph ph-title">Для добавления заглавия щёлкните мышью</div>
          <div class="ph ph-body">Для добавления текста щёлкните мышью</div>
        </article>
      </div>
      <div class="vscroll">
        <button aria-label="Вверх"><svg><use href="#i-up"/></svg></button>
        <div class="track"><div class="bar"></div></div>
        <button aria-label="Вниз"><svg class="r180"><use href="#i-up"/></svg></button>
      </div>
      <div class="hscroll">
        <button aria-label="Влево"><svg class="r270"><use href="#i-up"/></svg></button>
        <div class="track"><div class="bar"></div></div>
        <button aria-label="Вправо"><svg class="r90"><use href="#i-up"/></svg></button>
      </div>
    </section>
    <div class="splitter right"><button aria-label="Свернуть боковую панель"><svg viewBox="0 0 7 8"><path d="M1 0v8l5-4z" fill="#fff"/></svg></button></div>

    <aside class="deck">
      <div class="deck-title"><h2>Свойства</h2><button class="close" aria-label="Закрыть боковую панель"><svg><use href="#i-x"/></svg></button></div>
      <div class="band"><svg class="fold"><use href="#i-minus"/></svg><h3>Слайд</h3>
        <button class="more" aria-label="Дополнительно"><svg viewBox="0 0 11 11"><path d="M.5 1h10v9.500H.5z" fill="#fff" stroke="#3565ae"/><path d="M0 1.500h11" stroke="#5b9be8" stroke-width="2"/><path d="M3 6.500h1m1 0h1m1 0h1" stroke="#222"/></svg></button></div>
      <form class="props">
        <label for="fmt"><u>Ф</u>ормат:</label>
        <div class="combo"><select id="fmt"><option>Экран 16:9</option></select></div>
        <label for="ori"><u>О</u>риентация:</label>
        <div class="combo"><select id="ori"><option>Альбомная</option></select></div>
        <label for="bg">Фо<u>н</u>:</label>
        <div class="combo"><select id="bg"><option>Нет</option></select></div>
        <button type="button" class="push"><span><u>В</u>ставить изображение</span></button>
        <label for="master">Мастер-слайд:</label>
        <div class="combo"><select id="master"><option>Обычный</option></select></div>
        <label class="check"><input type="checkbox" checked><span>Фон <u>м</u>астера</span></label>
        <label class="check"><input type="checkbox" checked><span>Об<u>ъ</u>екты мастера</span></label>
        <button type="button" class="push"><svg><use href="#i-slide"/></svg><span><u>Р</u>ежим мастера</span></button>
      </form>
      <div class="band"><svg class="fold"><use href="#i-minus"/></svg><h3>Макеты</h3></div>
      <div class="layouts">
        <button aria-label="Пустой слайд"><span class="lay"></span></button>
        <button class="focus" aria-label="Титульный слайд"><span class="lay"><i class="t"></i><i class="b w6 h2 line"></i></span></button>
        <button aria-label="Заголовок, содержимое"><span class="lay"><i class="t"></i><i class="b w6 h2"></i></span></button>
        <button aria-label="Заголовок и два блока"><span class="lay"><i class="t"></i><i class="b w3 h2"></i><i class="b w3 h2"></i></span></button>
        <button aria-label="Только заголовок"><span class="lay"><i class="t"></i></span></button>
        <button aria-label="Текст по центру"><span class="lay center"></span></button>
        <button aria-label="Заголовок, 2 блока и блок"><span class="lay"><i class="t"></i><i class="b w3"></i><i class="b w3 h2"></i><i class="b w3"></i></span></button>
        <button aria-label="Заголовок, блок и 2 блока"><span class="lay"><i class="t"></i><i class="b w3 h2"></i><i class="b w3"></i><i class="b w3"></i></span></button>
        <button aria-label="Заголовок, 2 блока над блоком"><span class="lay"><i class="t"></i><i class="b w3"></i><i class="b w3"></i><i class="b w6"></i></span></button>
        <button aria-label="Заголовок, блок над блоком"><span class="lay"><i class="t"></i><i class="b w6"></i><i class="b w6"></i></span></button>
        <button aria-label="Заголовок, 4 блока"><span class="lay"><i class="t"></i><i class="b w3"></i><i class="b w3"></i><i class="b w3"></i><i class="b w3"></i></span></button>
        <button aria-label="Заголовок, 6 блоков"><span class="lay"><i class="t"></i><i class="b w2"></i><i class="b w2"></i><i class="b w2"></i><i class="b w2"></i><i class="b w2"></i><i class="b w2"></i></span></button>
      </div>
    </aside>

    <nav class="tabs" aria-label="Боковая панель">
      <button class="tab-menu" aria-label="Параметры панели"><svg viewBox="0 0 10 10"><path d="M0 1.500h6M0 3.500h6M0 5.500h6" stroke="#2b3f66"/><path d="M4 6.500h5L6.500 9z" fill="#111a33"/></svg></button>
      <button class="tab on" aria-label="Свойства"><svg><use href="#i-wrench"/></svg></button>
      <button class="tab" aria-label="Смена слайда"><svg><use href="#i-trans"/></svg></button>
      <button class="tab" aria-label="Анимация"><svg><use href="#i-anim"/></svg></button>
      <button class="tab" aria-label="Мастер-слайды"><svg><use href="#i-slide"/></svg></button>
      <button class="tab" aria-label="Стили"><svg><use href="#i-styles"/></svg></button>
      <button class="tab" aria-label="Галерея"><svg><use href="#i-gallery"/></svg></button>
      <button class="tab" aria-label="Навигатор"><svg><use href="#i-compass"/></svg></button>
    </nav>
  </main>

  <footer class="status">
    <span class="cell s-page">Слайд 1 из 1</span>
    <span class="cell s-gap"></span>
    <span class="cell s-style">Обычный</span>
    <span class="cell s-pos">
      <svg viewBox="0 0 14 12"><path d="M4.500 5.500h9v5h-9z" fill="none" stroke="#000" stroke-dasharray="1 1"/><path d="M0 4.500h7M3.500 0v8" stroke="#1a1ad0" stroke-dasharray="2 1"/></svg><span class="pos">29,44 / 8,47</span>
      <svg viewBox="0 0 14 12"><path d="M4.500 4.500h8v6h-8z" fill="none" stroke="#000" stroke-dasharray="1 1"/><path d="M5 1.500h2m3 0h3M.5 4v2m0 2v3M2 4.500v7" stroke="#000"/></svg><span>0,00 x 0,00</span>
    </span>
    <span class="cell s-mod"><svg viewBox="0 0 12 12"><path d="M.5 .5h8v11h-8z" fill="#f6f6f6" stroke="#888"/><path d="M6 6.500h5M8.500 4v5M7 5l3 3M10 5L7 8" stroke="#b01c1c"/></svg></span>
    <span class="cell s-sig"></span>
    <span class="cell s-lang">Русский</span>
    <span class="cell s-fit"><svg viewBox="0 0 12 12"><path d="M6 1v10M1 6h10" stroke="#333" stroke-width="1.500"/><path d="M6 0L3.500 3h5zM6 12L3.500 9h5zM0 6l3-2.500v5zM12 6L9 3.500v5z" fill="#333"/></svg></span>
    <span class="cell s-zoom">
      <button aria-label="Уменьшить"><svg viewBox="0 0 8 8"><path d="M0 4h8" stroke="#999" stroke-width="2"/></svg></button>
      <input type="range" min="0" max="100" value="33" aria-label="Масштаб">
      <button aria-label="Увеличить"><svg viewBox="0 0 8 8"><path d="M0 4h8M4 0v8" stroke="#999" stroke-width="2"/></svg></button>
    </span>
    <span class="cell s-pct">70 %</span>
  </footer>
</div>
</body>
</html>
```
FILE: styles.css
```css
* { box-sizing: border-box; }

body {
  margin: 0;
  font-family: "Noto Sans", "Open Sans", sans-serif;
  font-size: 11px;
  line-height: 16px;
  color: #000;
}

button, select, input {
  margin: 0;
  padding: 0;
  border: 0;
  background: none;
  font: inherit;
  color: inherit;
}

h1, h2, h3 { margin: 0; font-size: 11px; line-height: 16px; }
u { text-underline-offset: 2px; text-decoration-thickness: 1px; }
svg { display: block; flex: none; }
.sprite { position: absolute; width: 0; height: 0; }

.abc { font: bold 11px "Open Sans", sans-serif; fill: #333; }
.glyph-a { font: bold 10px "Open Sans", sans-serif; fill: #5c3566; }

.window {
  display: flex;
  flex-direction: column;
  height: 100vh;
  border: 1px solid #41b6e6;
  background: #f0f0f0;
}

.titlebar {
  display: flex;
  align-items: center;
  height: 30px;
  padding: 0 2px 0 8px;
  background: #2cb7ef;
}
.app-icon { width: 17px; height: 17px; margin-right: 4px; }
.app-title { flex: 1; font-weight: normal; }
.win-btn { display: grid; place-items: center; width: 45px; height: 30px; }
.win-btn svg { width: 10px; height: 10px; overflow: visible; }

.chrome {
  flex: none;
  background: linear-gradient(#fff, #fafafa 65%, #f0f0f0);
  border-bottom: 1px solid #a5a5a5;
}

.menubar {
  display: flex;
  align-items: center;
  height: 24px;
  padding: 0 7px 0 8px;
  gap: 16px;
}
.close { display: grid; place-items: center; width: 11px; height: 11px; }
.close svg { width: 10px; height: 10px; }
.menubar .close { margin-left: auto; }

.toolbar { display: flex; align-items: center; height: 36px; padding-left: 3px; }
.toolbar.drawing { height: 40px; padding-top: 1px; }
.group { display: flex; }
.grip {
  width: 3px;
  height: 23px;
  margin-right: 5px;
  background: repeating-linear-gradient(#a8a8a8 0 3px, transparent 3px 5px);
}
.grip.inner { margin: 0 5px 0 7px; }
.tool {
  display: grid;
  place-items: center;
  flex: none;
  width: 33px;
  height: 34px;
}
.tool svg { width: 24px; height: 24px; }
.tool.wide { width: 41px; }
.tool.wide svg { width: 32px; }
.tool.on { background: #c7e3f9; border: 1px solid #92cbf5; }
.drop { display: grid; place-items: center; flex: none; width: 11px; height: 34px; }
.drop svg { width: 6px; height: 4px; }
.drop:disabled svg { fill: #999; }
.tight { padding-right: 2px; }
.tight .drop { width: 10px; }
.sep { flex: none; width: 1px; height: 18px; margin: 0 4px 0 3px; background: #c6c6c6; }
.drawing .drop + .sep { margin-left: 4px; }

.workspace { flex: 1; display: flex; min-height: 0; border-bottom: 1px solid #9a9a9a; }

.slides {
  flex: none;
  display: flex;
  flex-direction: column;
  width: 416px;
  padding: 2px 6px 2px 2px;
  border: solid #a0a0a0;
  border-width: 1px 1px 1px 0;
}
.panel-title { display: flex; justify-content: space-between; align-items: center; height: 22px; padding: 0 1px; }
.slide-list { flex: 1; padding: 8px; background: #fff; border: solid #a0a0a0; border-width: 1px 0 0 1px; }
.thumb {
  display: flex;
  gap: 5px;
  padding: 3px;
  border: 1px solid #5f86a8;
  background: linear-gradient(#8fb2cf 25%, #a3c6e3 80%);
}
.num { width: 16px; text-align: right; color: #555; line-height: 14px; font-weight: bold; }
.mini { flex: 1; aspect-ratio: 361 / 204; background: #fff; border: 1px solid #8a8a8a; box-shadow: 1px 1px 2px #0006; }

.splitter {
  flex: none;
  display: flex;
  align-items: center;
  width: 6px;
  border-right: 1px solid #9a9a9a;
}
.splitter button { display: grid; place-items: center; flex: none; width: 7px; height: 73px; margin: 0 -1px 0 -2px; background: #6b6b6b; }
.splitter svg { width: 7px; height: 8px; }
.splitter.right { width: 7px; border-left: 1px solid #9a9a9a; }
.splitter.right button { margin: 0 -1px; }

.editor {
  flex: 1;
  display: grid;
  grid-template: minmax(0, 1fr) 16px / minmax(0, 1fr) 17px;
  min-width: 0;
}
.canvas {
  display: grid;
  place-items: center;
  padding: 0 12px;
  background: #dededd;
  border: solid #fff;
  border-width: 0 1px 1px 0;
}
.slide {
  display: grid;
  grid-template-rows: 92fr 241fr;
  width: 100%;
  aspect-ratio: 741 / 418;
  padding: 4px 36px 77px;
  background: #fff;
  border: 1px solid #8f8f93;
  box-shadow: 0 1px 6px #0009;
  font-family: "Liberation Sans", Arial, sans-serif;
  text-align: center;
}
.ph { display: grid; place-content: center; min-height: 0; border: 1px dashed #bebebe; }
.ph-title { padding: 0 60px; font-size: 41px; line-height: 46px; border-bottom: 0; }
.ph-body { font-size: 30px; line-height: 34px; }

.vscroll, .hscroll { display: flex; }
.vscroll { flex-direction: column; padding-right: 1px; }
.vscroll button, .hscroll button { display: grid; place-items: center; flex: none; width: 16px; height: 16px; }
.vscroll button { height: 27px; padding-bottom: 8px; }
.vscroll button:last-child { padding: 8px 0 0; }
.vscroll svg, .hscroll svg { width: 10px; height: 8px; }
.track { flex: 1; display: flex; }
.bar { background: #cdcdcd; }
.vscroll .bar { width: 15px; height: 100%; }
.hscroll .bar { width: 34%; height: 15px; margin-left: 33%; }
.r90 { transform: rotate(90deg); }
.r180 { transform: rotate(180deg); }
.r270 { transform: rotate(270deg); }

.deck {
  flex: none;
  width: 329px;
  margin: 4px 0 3px 4px;
  border: 1px solid #e0e0e0;
  border-top-width: 2px;
}
.deck-title { display: flex; align-items: center; justify-content: space-between; height: 25px; padding: 0 4px 0 10px; }
.deck-title .close { margin-bottom: 4px; }
.band {
  display: flex;
  align-items: center;
  height: 26px;
  padding: 2px 5px 0;
  gap: 4px;
  background: linear-gradient(#dedede, #f0f0f0);
}
.fold { width: 10px; height: 10px; }
.more { margin: 0 0 6px auto; }
.more svg { width: 11px; height: 11px; }

.props {
  display: grid;
  grid-template-columns: 95px 203px;
  column-gap: 8px;
  row-gap: 6px;
  align-items: center;
  padding: 7px 0;
}
.props label { text-align: right; }
.combo { position: relative; height: 23px; }
.combo select {
  appearance: none;
  width: 100%;
  height: 100%;
  padding: 0 20px 0 1px;
  background: #fff;
  border: 1px solid #828790;
  border-radius: 0;
}
.combo::after {
  content: "";
  position: absolute;
  top: 1px;
  right: 1px;
  width: 17px;
  height: 21px;
  background: #e1e1e1;
  border: 1px solid #adadad;
  pointer-events: none;
}
.combo::before {
  content: "";
  position: absolute;
  z-index: 1;
  top: 7px;
  right: 7px;
  width: 6px;
  height: 6px;
  border: solid #555;
  border-width: 0 1px 1px 0;
  transform: rotate(45deg);
  pointer-events: none;
}
.push {
  grid-column: 2;
  display: flex;
  align-items: center;
  justify-content: center;
  gap: 4px;
  height: 28px;
  margin: 1px;
  background: #e1e1e1;
  border: 1px solid #adadad;
}
.push svg { width: 17px; height: 16px; }
.props .check { grid-column: 2; display: flex; align-items: center; gap: 4px; height: 16px; text-align: left; }
.check input {
  appearance: none;
  display: grid;
  place-items: center;
  width: 13px;
  height: 13px;
  border: 1px solid #333;
  background: #fff;
}
.check input::before {
  content: "";
  width: 4px;
  height: 8px;
  margin-bottom: 2px;
  border: solid #333;
  border-width: 0 1px 1px 0;
  transform: rotate(40deg);
}

.layouts { display: grid; grid-template-columns: repeat(4, 81px); grid-auto-rows: 66px; padding-left: 1px; }
.layouts button { display: grid; place-content: start; padding: 9px; }
.layouts .focus { outline: 1px dotted #000; outline-offset: -1px; }
.lay {
  display: grid;
  grid-template: 9px 12px 12px / repeat(6, 1fr);
  grid-auto-flow: row dense;
  row-gap: 2px;
  column-gap: 3px;
  width: 61px;
  height: 47px;
  padding: 3px 4px;
  background: linear-gradient(#fff, #ececec);
  border: 1px solid #8f8f8f;
  box-shadow: inset 0 0 0 1px #fff;
}
.t {
  grid-column: span 6;
  border: 1px solid #d4d4d4;
  background: linear-gradient(#729fcf, #729fcf) center / 41px 3px no-repeat;
}
.b { border: 1px solid #cfcfcf; margin-top: 2px; margin-bottom: -2px; }
.w6 { grid-column: span 6; }
.w3 { grid-column: span 3; }
.w2 { grid-column: span 2; }
.h2 { grid-row: span 2; }
.line { background: linear-gradient(#729fcf, #729fcf) 50% 35% / 25px 2px no-repeat; }
.center {
  background:
    linear-gradient(#729fcf, #729fcf) 50% 19px / 27px 2px no-repeat,
    linear-gradient(#729fcf, #729fcf) 50% 24px / 17px 2px no-repeat,
    linear-gradient(#fff, #ececec);
}

.tabs { flex: 1 0 40px; max-width: 40px; display: flex; flex-direction: column; align-items: center; gap: 3px; padding-top: 4px; }
.tab-menu { display: grid; place-items: center; width: 22px; height: 36px; border-bottom: 1px solid #dcdcdc; }
.tab-menu svg { width: 10px; height: 10px; }
.tab { display: grid; place-items: center; flex: none; width: 32px; height: 32px; border: 1px solid transparent; border-radius: 3px; }
.tab.on { border-color: #b0b0b0; }
.tab svg { width: 24px; height: 24px; }

.status { display: flex; align-items: center; height: 21px; padding-top: 1px; }
.cell { display: flex; align-items: center; flex: none; height: 17px; border-left: 1px solid #a5a5a5; white-space: nowrap; }
.s-page { width: 81px; padding-left: 11px; border-left: 0; }
.s-gap { width: 363px; }
.s-style { width: 234px; padding-left: 9px; }
.s-pos { flex: 1; padding-left: 10px; gap: 6px; }
.s-pos svg { width: 14px; height: 12px; }
.pos { width: 178px; }
.s-mod { width: 24px; padding-left: 7px; }
.s-mod svg { width: 12px; height: 12px; }
.s-sig { width: 30px; }
.s-lang { width: 223px; justify-content: center; }
.s-fit { width: 23px; justify-content: center; }
.s-fit svg { width: 12px; height: 12px; }
.s-zoom { width: 144px; padding-left: 10px; gap: 6px; }
.s-zoom button svg { width: 8px; height: 8px; }
.s-zoom input { appearance: none; width: 98px; height: 9px; background: linear-gradient(#999, #999) 47px 0 / 2px 9px no-repeat, linear-gradient(#999, #999) 0 4px / 100% 2px no-repeat; }
.s-zoom input::-webkit-slider-thumb { appearance: none; width: 9px; height: 9px; border: 1px solid #888; border-radius: 50%; background: #fff; }
.s-pct { width: 50px; padding-left: 12px; }
```
